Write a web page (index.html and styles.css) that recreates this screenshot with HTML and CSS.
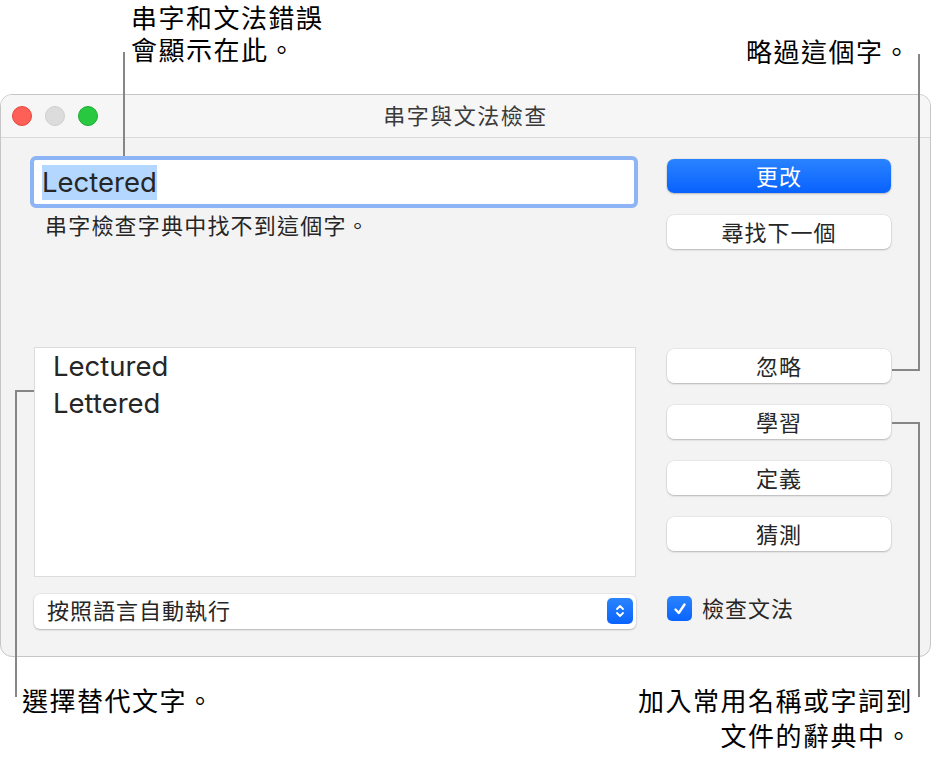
FILE: index.html
```html
<!DOCTYPE html>
<html lang="zh-Hant">
<head>
    <meta charset="UTF-8">
    <title>串字與文法檢查</title>
    <link rel="stylesheet" href="styles.css">
</head>
<body>
    <div class="page">
        <div class="top-notes">
            <div class="note note-left">串字和文法錯誤<br>會顯示在此。</div>
            <div class="note note-right">略過這個字。</div>
        </div>

        <div class="window">
            <div class="titlebar">
                <div class="lights">
                    <span class="light red"></span>
                    <span class="light gray"></span>
                    <span class="light green"></span>
                </div>
                <div class="title">串字與文法檢查</div>
            </div>

            <div class="content">
                <div class="left-col">
                    <div class="field"><span class="selected">Lectered</span></div>
                    <p class="message">串字檢查字典中找不到這個字。</p>
                    <div class="guesses">
                        <div class="guess">Lectured</div>
                        <div class="guess">Lettered</div>
                    </div>
                    <div class="popup">
                        <span class="popup-label">按照語言自動執行</span>
                        <span class="stepper">
                            <svg width="10" height="16" viewBox="0 0 10 16">
                                <path d="M2 6 L5 3 L8 6 M2 10 L5 13 L8 10" fill="none" stroke="#fff" stroke-width="1.8" stroke-linecap="round" stroke-linejoin="round"/>
                            </svg>
                        </span>
                    </div>
                </div>

                <div class="right-col">
                    <button class="btn primary">更改</button>
                    <button class="btn">尋找下一個</button>
                    <button class="btn gap-big">忽略</button>
                    <button class="btn">學習</button>
                    <button class="btn">定義</button>
                    <button class="btn">猜測</button>
                    <label class="check">
                        <span class="box">
                            <svg width="16" height="16" viewBox="0 0 16 16">
                                <path d="M3.5 8.5 L6.8 12 L12.5 3.5" fill="none" stroke="#fff" stroke-width="2.4" stroke-linecap="round" stroke-linejoin="round"/>
                            </svg>
                        </span>
                        <span class="check-label">檢查文法</span>
                    </label>
                </div>
            </div>
        </div>

        <div class="bottom-notes">
            <div class="note note-bl">選擇替代文字。</div>
            <div class="note note-br">加入常用名稱或字詞到<br>文件的辭典中。</div>
        </div>

        <!-- callout lines -->
        <div class="line" style="left:123px; top:52px; width:2px; height:104px;"></div>
        <div class="line" style="left:918px; top:54px; width:2px; height:317px;"></div>
        <div class="line" style="left:892px; top:369px; width:28px; height:2px;"></div>
        <div class="line" style="left:892px; top:422px; width:28px; height:2px;"></div>
        <div class="line" style="left:918px; top:422px; width:2px; height:275px;"></div>
        <div class="line" style="left:15px; top:390px; width:19px; height:2px;"></div>
        <div class="line" style="left:15px; top:390px; width:2px; height:307px;"></div>
    </div>
</body>
</html>
```

FILE: styles.css
```css
* {
    box-sizing: border-box;
    margin: 0;
    padding: 0;
}

body {
    background: #fff;
    font-family: "Noto Sans CJK TC", "Noto Sans", sans-serif;
    color: #000;
}

.page {
    position: relative;
    width: 931px;
    height: 758px;
    overflow: hidden;
}

/* Callout texts */
.note {
    font-family: "Liberation Sans", "Noto Sans CJK TC", sans-serif;
    font-size: 26px;
    line-height: 32px;
    letter-spacing: 1.5px;
}

.top-notes {
    height: 94px;
    display: flex;
    justify-content: space-between;
}

.note-left {
    padding: 3px 0 0 131px;
}

.note-right {
    padding: 37px 20px 0 0;
}

.bottom-notes {
    display: flex;
    justify-content: space-between;
    padding: 28px 18px 0 22px;
}

.note-bl,
.note-br {
    line-height: 35px;
}

.note-br {
    text-align: right;
}

.line {
    position: absolute;
    background: #868686;
}

/* Window */
.window {
    height: 563px;
    border: 1px solid #c6c6c6;
    border-radius: 12px;
    background: #f3f3f3;
    overflow: hidden;
}

.titlebar {
    height: 43px;
    border-bottom: 1px solid #dadada;
    background: #f6f6f6;
    display: grid;
    grid-template-columns: 1fr auto 1fr;
    align-items: center;
}

.lights {
    display: flex;
    gap: 13px;
    padding-left: 11px;
}

.light {
    width: 20px;
    height: 20px;
    border-radius: 50%;
}

.red { background: #fe5f57; border: 1px solid #e2463f; }
.gray { background: #dcdcdc; border: 1px solid #cdcdcd; }
.green { background: #28c840; border: 1px solid #1eab34; }

.title {
    font-size: 22px;
    letter-spacing: 1.5px;
    color: #3a3a3a;
    padding-bottom: 4px;
}

.content {
    display: flex;
    padding: 18px 0 0 29px;
    color: #262626;
}

.left-col {
    width: 608px;
}

.field {
    height: 52px;
    border: 4px solid #8db4f4;
    border-radius: 6px;
    background: #fff;
    padding-left: 8px;
    display: flex;
    align-items: center;
}

.selected {
    font-family: Inter, "Noto Sans", sans-serif;
    font-size: 27.5px;
    line-height: 35px;
    background: #b3d7ff;
    color: #262626;
}

.message {
    margin-top: 3px;
    padding-left: 15px;
    font-size: 22px;
    line-height: 26px;
    letter-spacing: 1.2px;
}

.guesses {
    margin: 110px 0 0 4px;
    width: 602px;
    height: 230px;
    background: #fff;
    border: 1px solid #dcdcdc;
    padding: 0 0 0 18px;
}

.guess {
    font-family: Inter, "Noto Sans", sans-serif;
    font-size: 27.5px;
    line-height: 37px;
}

.popup {
    margin: 17px 0 0 4px;
    width: 602px;
    height: 35px;
    background: #fff;
    border-radius: 6px;
    box-shadow: 0 1px 2px rgba(0, 0, 0, 0.22), 0 0 0 0.5px rgba(0, 0, 0, 0.08);
    display: flex;
    align-items: center;
    justify-content: space-between;
    padding: 0 3px 0 13px;
    font-size: 22px;
    letter-spacing: 1px;
}

.popup-label {
    padding-bottom: 5px;
}

.stepper {
    width: 26px;
    height: 26px;
    margin-top: -2px;
    border-radius: 5px;
    background: linear-gradient(#2a84ff, #0a64fe);
    display: flex;
    align-items: center;
    justify-content: center;
}

/* Buttons */
.right-col {
    width: 224px;
    margin-left: 29px;
    padding-top: 3px;
    display: flex;
    flex-direction: column;
}

.btn {
    height: 34px;
    margin-top: 22px;
    padding-bottom: 3px;
    border: none;
    border-radius: 7px;
    background: #fff;
    box-shadow: 0 1px 2px rgba(0, 0, 0, 0.22), 0 0 0 0.5px rgba(0, 0, 0, 0.08);
    font-family: "Noto Sans CJK TC", sans-serif;
    font-size: 22px;
    letter-spacing: 1px;
    color: #262626;
}

.btn:first-child {
    margin-top: 0;
}

.btn.primary {
    background: linear-gradient(#2a83ff, #0862fe);
    color: #fff;
}

.btn.gap-big {
    margin-top: 100px;
}

.check {
    margin-top: 45px;
    height: 25px;
    display: flex;
    align-items: center;
    gap: 10px;
    font-size: 22px;
    letter-spacing: 1px;
}

.check-label {
    padding-bottom: 4px;
}

.box {
    width: 25px;
    height: 25px;
    border-radius: 5px;
    background: linear-gradient(#2a84ff, #0a64fe);
    display: flex;
    align-items: center;
    justify-content: center;
}
```
